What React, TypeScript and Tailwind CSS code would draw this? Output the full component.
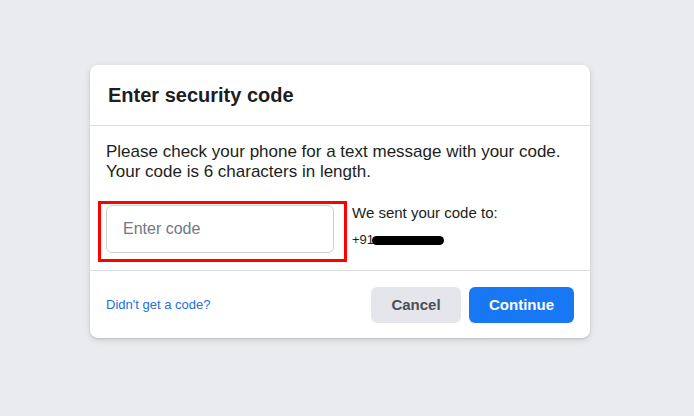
export default function App() {
  return (
    <div className="min-h-[416px] w-full bg-[#e9ebee] pt-[65px] font-['Liberation_Sans',Arial,sans-serif]">
      <div className="ml-[90px] w-[500px] rounded-lg bg-white shadow-[0_1px_2px_rgba(0,0,0,0.1),0_2px_6px_rgba(0,0,0,0.12)]">
        <div className="flex h-[61px] items-center border-b border-[#dadde1] px-[18px]">
          <h2 className="text-[20px] font-bold text-[#1c1e21]">Enter security code</h2>
        </div>

        <div className="px-4 pt-4 pb-[17px] border-b border-[#dadde1]">
          <p className="text-[17px] leading-5 text-[#1c1e21]">
            Please check your phone for a text message with your code.
            <br />
            Your code is 6 characters in length.
          </p>
          <div className="mt-[23px] flex gap-[18px]">
            <div className="relative">
              <input
                className="h-[48px] w-[228px] rounded-md border border-[#ccd0d5] px-4 text-[16px] text-[#1c1e21] placeholder:text-[#727884] outline-none"
                placeholder="Enter code"
              />
              <div className="pointer-events-none absolute -left-2 -top-1 -right-[13px] -bottom-[9px] border-[3px] border-[#ff0000]" />
            </div>
            <div className="text-[#1c1e21]">
              <div className="text-[15px] leading-[18px] mt-[-1px]">We sent your code to:</div>
              <div className="mt-[10px] flex items-center text-[13px] leading-4">
                <span>+91</span>
                <span className="ml-[-2px] inline-block h-[9px] w-[72px] rounded-full bg-black" />
              </div>
            </div>
          </div>
        </div>

        <div className="flex items-center justify-between px-4 pt-4 pb-[15px]">
          <a className="text-[13px] text-[#216fdb]" href="#">Didn't get a code?</a>
          <div className="flex gap-2">
            <button className="h-9 w-[90px] rounded-md bg-[#e4e6eb] text-[15px] font-bold text-[#4b4f56]">Cancel</button>
            <button className="h-9 w-[105px] rounded-md bg-[#1877f2] text-[15px] font-bold text-white">Continue</button>
          </div>
        </div>
      </div>
    </div>
  );
}
